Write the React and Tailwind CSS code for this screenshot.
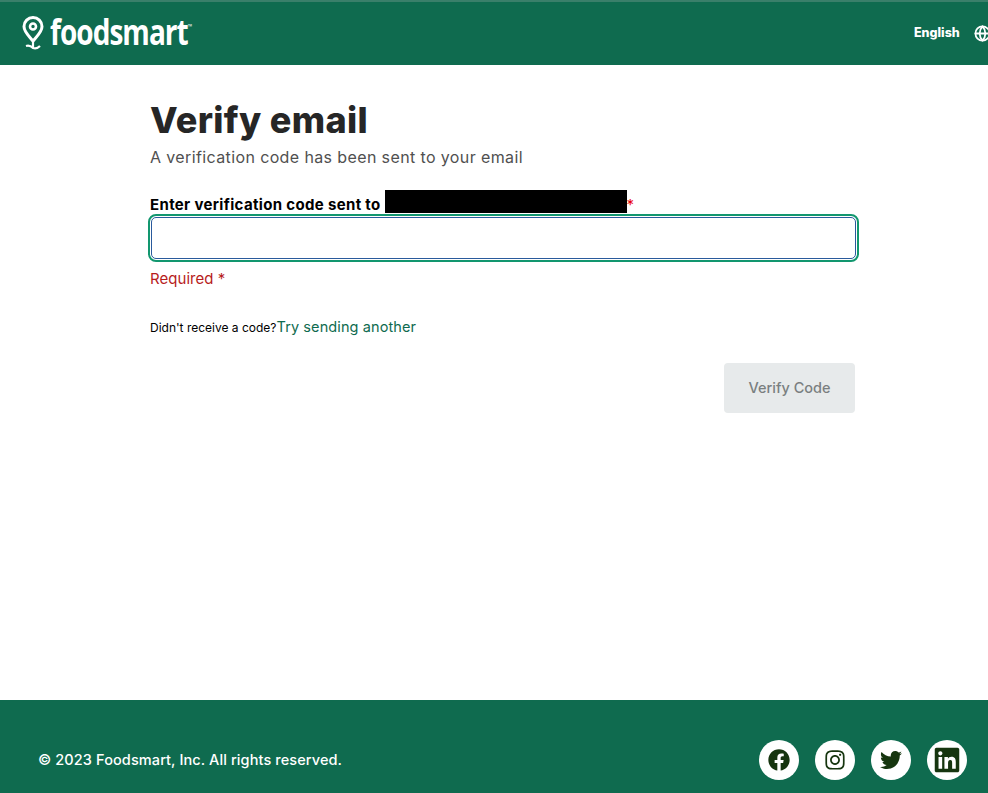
import { FaFacebook, FaInstagram, FaTwitter, FaLinkedin } from 'react-icons/fa';
import { Globe } from 'lucide-react';

const socials = [FaFacebook, FaInstagram, FaTwitter, FaLinkedin];

const LogoPin = () => (
  <svg width="22" height="34" viewBox="0 0 22 34" fill="none" stroke="white" strokeWidth="3">
    <path d="M11 25 C7 20 2 16 2 10.5 A9 9 0 0 1 20 10.5 C20 16 15 20 11 25 Z" />
    <circle cx="11" cy="10.5" r="3" fill="white" fillOpacity="0" strokeWidth="2.6" />
    <path d="M11 25 L11 32 M4 30 C7 29 9 30 11 32 C14 33 16 32 18 30" strokeWidth="2.2" />
  </svg>
);

const App = () => {
  return (
    <div className="min-h-screen flex flex-col bg-white font-['Inter',sans-serif]">
      <header className="h-[65px] flex items-center justify-between bg-[#0f6b4f] border-t-2 border-[#3a7f6a] pl-[22px] text-white">
        <div className="flex items-start gap-[6px] -mt-[1px]">
          <LogoPin />
          <span className="font-['Open_Sans',sans-serif] font-bold text-[35px] leading-[32px] tracking-[-1.2px] scale-x-[0.8] origin-left whitespace-nowrap">
            foodsmart<span className="text-[7px] leading-[0] font-normal tracking-normal align-[16px]">™</span>
          </span>
        </div>
        <div className="flex items-center w-[74px] gap-[14px] overflow-hidden">
          <span className="text-[12.5px] font-extrabold">English</span>
          <Globe size={17} strokeWidth={2.5} className="shrink-0" />
        </div>
      </header>

      <main className="flex-1 pl-[150px] pr-[133px] pt-[33px]">
        <h1 className="text-[36px] leading-[44px] font-extrabold tracking-[0.35px] text-[#262626]">Verify email</h1>
        <p className="text-[16px] leading-[24px] tracking-[0.38px] text-[#505050] mt-[3px]">
          A verification code has been sent to your email
        </p>
        <label className="block mt-[25px] h-[20px] text-[15px] leading-[22px] font-bold tracking-[0.34px] text-black whitespace-nowrap">
          Enter verification code sent to{' '}
          <span className="inline-block align-top -mt-[4px] w-[242px] h-[23px] bg-black" />
          <span className="text-red-600 font-normal">*</span>
        </label>
        <div className="rounded-[8px] border-[2px] border-[#12976f] p-[1px] -ml-[2px] -mr-[4px]">
          <input
            type="text"
            className="block w-full h-[42px] rounded-[5px] border border-[#2a5a9c] bg-white outline-none"
          />
        </div>
        <p className="mt-[5px] text-[15px] leading-[24px] tracking-[0.05px] text-[#b71c1c]">Required *</p>
        <p className="mt-[24px] text-[12px] leading-[24px] text-black">
          Didn't receive a code?
          <a href="#" className="text-[14.5px] tracking-[0.1px] text-[#0f6b4f]">Try sending another</a>
        </p>
        <div className="flex justify-end mt-[23px]">
          <button
            disabled
            className="w-[131px] h-[50px] rounded-[4px] bg-[#e7eaeb] text-[14.5px] font-medium text-[#7a7f80]"
          >
            Verify Code
          </button>
        </div>
      </main>

      <footer className="h-[93px] flex items-center justify-between bg-[#0f6b4f] pl-[38px] pr-[21px] pt-[26px] text-white">
        <span className="text-[14.5px] font-medium tracking-[0.1px]">© 2023 Foodsmart, Inc. All rights reserved.</span>
        <div className="flex gap-[16px]">
          {socials.map((Icon, i) => (
            <a key={i} href="#" className="w-[40px] h-[40px] rounded-full bg-white flex items-center justify-center text-[#16350f]">
              <Icon size={i === 3 ? 28 : 22} />
            </a>
          ))}
        </div>
      </footer>
    </div>
  );
};

export default App;
